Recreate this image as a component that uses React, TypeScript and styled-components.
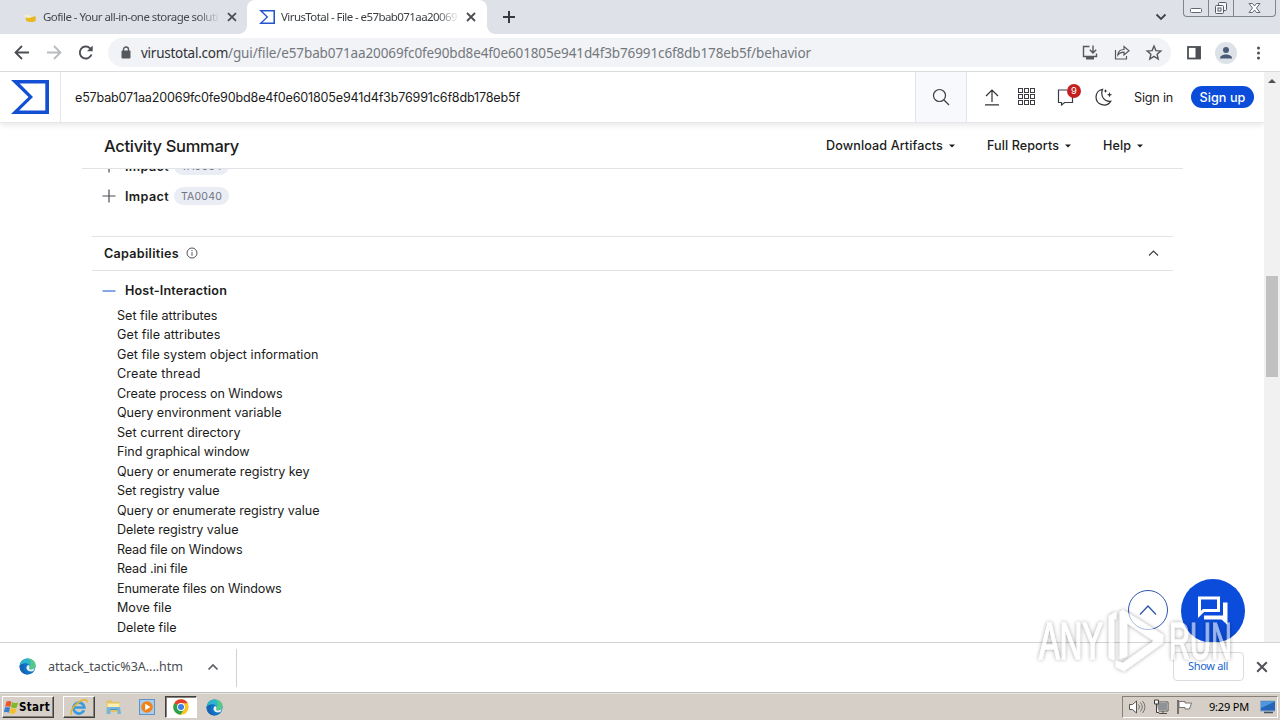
import React, { useLayoutEffect, useRef, useState } from "react";
import styled, { createGlobalStyle } from "styled-components";

const GlobalStyle = createGlobalStyle`
  * { box-sizing: border-box; }
  html, body { margin: 0; padding: 0; }
  body { overflow: hidden; background: #fff; }
`;

const chromeFont = `"Noto Sans", "DejaVu Sans", sans-serif`;
const pageFont = `Inter, Lato, sans-serif`;

/* ---------- Text that is tracked to a given width ---------- */

const Tracked = styled.span`
  display: inline-block;
  white-space: pre;
  flex: none;
`;

function FitText({ children, width }: { children: string; width: number }) {
  const ref = useRef<HTMLSpanElement>(null);
  const [spacing, setSpacing] = useState(0);
  useLayoutEffect(() => {
    if (ref.current) {
      const natural = ref.current.getBoundingClientRect().width;
      setSpacing((width - natural) / children.length);
    }
  }, [children, width]);
  return (
    <Tracked ref={ref} style={{ letterSpacing: `${spacing}px` }}>
      {children}
    </Tracked>
  );
}

/* ---------- Shell ---------- */

const Screen = styled.div`
  position: relative;
  display: flex;
  flex-direction: column;
  width: 1280px;
  height: 720px;
  overflow: hidden;
  background: #fff;
  color: #202124;
  font-family: ${chromeFont};
`;

/* ---------- Tab strip ---------- */

const TabStrip = styled.div`
  display: flex;
  height: 34px;
  background: #dee1e8;
`;

const Tab = styled.div<{ $active?: boolean; $width: number }>`
  position: relative;
  display: flex;
  align-items: center;
  width: ${(p) => p.$width}px;
  padding: 0 10px 0 ${(p) => (p.$active ? 12 : 22)}px;
  font-size: 11.5px;
  color: ${(p) => (p.$active ? "#3c4043" : "#45484d")};
  background: ${(p) => (p.$active ? "#fff" : "transparent")};
  border-radius: 8px 8px 0 0;
  ${(p) =>
    p.$active &&
    `
    &::before, &::after {
      content: "";
      position: absolute;
      bottom: 0;
      width: 8px;
      height: 8px;
    }
    &::before { left: -8px; background: radial-gradient(circle at 0 0, transparent 7.5px, #fff 8px); }
    &::after { right: -8px; background: radial-gradient(circle at 100% 0, transparent 7.5px, #fff 8px); }
  `}
`;

const TabTitle = styled.div`
  width: 176px;
  margin: 0 9px 0 6px;
  overflow: hidden;
  line-height: 18px;
  mask-image: linear-gradient(90deg, #000 88%, rgba(0, 0, 0, 0.1) 100%);
`;

const NewTab = styled.div`
  display: flex;
  align-items: center;
  padding-left: 15px;
`;

const WindowArea = styled.div`
  display: flex;
  margin-left: auto;
  align-items: flex-start;
  gap: 16px;
`;

const TabSearch = styled.div`
  padding-top: 12px;
  line-height: 0;
`;

const WindowButtons = styled.div`
  display: flex;
  height: 17px;
  margin-right: 4px;
  border: 1px solid #7f858f;
  border-top: 0;
  border-radius: 0 0 4px 4px;
`;

const WindowButton = styled.div<{ $width: number }>`
  display: flex;
  align-items: center;
  justify-content: center;
  width: ${(p) => p.$width}px;
  & + & { border-left: 1px solid #7f858f; }
`;

/* ---------- Toolbar ---------- */

const Toolbar = styled.div`
  display: flex;
  align-items: center;
  height: 38px;
  padding: 0 12px 0 13px;
  border-bottom: 1px solid #d9dadc;
  background: #fff;
`;

const NavButtons = styled.div`
  display: flex;
  gap: 14px;
  width: 95px;
`;

const AddressBar = styled.div`
  display: flex;
  align-items: center;
  width: 1063px;
  height: 29px;
  padding: 0 8px 0 12px;
  border-radius: 15px;
  background: #f1f3f6;
  font-size: 13.5px;
  color: #74787d;
`;

const Url = styled.div`
  display: flex;
  flex: 1;
  margin-left: 9px;
  line-height: 20px;
`;

const Host = styled.span`
  color: #303236;
`;

const AddressActions = styled.div`
  display: flex;
  gap: 14px;
`;

const ToolbarActions = styled.div`
  display: flex;
  flex: 1;
  align-items: center;
  justify-content: space-between;
  padding-left: 15px;
`;

const Avatar = styled.div`
  display: flex;
  align-items: center;
  justify-content: center;
  width: 22px;
  height: 22px;
  border-radius: 50%;
  background: #dde1e8;
`;

/* ---------- Page ---------- */

const Viewport = styled.div`
  display: flex;
  height: 570px;
`;

const Page = styled.main`
  display: flex;
  flex-direction: column;
  flex: 1;
  overflow: hidden;
  font-family: ${pageFont};
  font-size: 12.6px;
  color: #1b1c20;
`;

const PageHeader = styled.header`
  position: relative;
  z-index: 1;
  display: flex;
  flex: none;
  height: 51px;
  border-bottom: 1px solid #e6e7ea;
  box-shadow: 0 2px 6px rgba(0, 0, 0, 0.1);
`;

const LogoBox = styled.div`
  display: flex;
  align-items: center;
  width: 61px;
  padding-left: 11px;
  border-right: 1px solid #e3e6ea;
`;

const SearchField = styled.div`
  display: flex;
  align-items: center;
  width: 854px;
  padding-left: 14px;
`;

const SearchButton = styled.div`
  display: flex;
  align-items: center;
  justify-content: center;
  width: 52px;
  padding-right: 1px;
  background: #f7f9fc;
  border: solid #e1e4ea;
  border-width: 0 1px;
`;

const HeaderActions = styled.div`
  display: flex;
  align-items: center;
  padding-left: 14px;
`;

const IconSlot = styled.div<{ $width: number }>`
  position: relative;
  display: flex;
  justify-content: center;
  width: ${(p) => p.$width}px;
`;

const Badge = styled.span`
  position: absolute;
  top: -4px;
  right: 0;
  width: 14px;
  height: 14px;
  border-radius: 50%;
  background: #c5201f;
  color: #fff;
  font-size: 9.5px;
  line-height: 14px;
  text-align: center;
`;

const SignIn = styled.a`
  margin-left: 8px;
`;

const SignUp = styled.a`
  display: flex;
  align-items: center;
  justify-content: center;
  width: 63px;
  height: 22px;
  margin-left: 18px;
  border-radius: 11px;
  background: #0b4dda;
  color: #fff;
  font-weight: 500;
`;

const SummaryBar = styled.div`
  display: flex;
  align-items: center;
  flex: none;
  width: 1101px;
  height: 46px;
  margin-left: 82px;
  padding: 0 40px 0 22px;
  border-bottom: 1px solid #e2e3e6;
`;

const SummaryTitle = styled.h1`
  margin: 0;
  flex: 1;
  font-size: 16.5px;
  font-weight: 500;
  line-height: 24px;
`;

const Menus = styled.div`
  display: flex;
  gap: 32px;
`;

const MenuLabel = styled.div`
  display: flex;
  align-items: center;
  gap: 6px;
  font-weight: 500;
`;

const Scrolled = styled.div`
  display: flex;
  flex-direction: column;
  flex: 1;
  min-height: 0;
  width: 1081px;
  margin-left: 92px;
  overflow: hidden;
`;

const Tactics = styled.div`
  flex: none;
  height: 69px;
  margin-top: -18px;
  margin-bottom: 16px;
`;

const TacticRow = styled.div`
  display: flex;
  align-items: center;
  height: 30px;
  padding-left: 10px;
  font-weight: 600;
`;

const TacticName = styled.div`
  margin: 0 5px 0 9px;
`;

const Tag = styled.span`
  display: flex;
  align-items: center;
  justify-content: center;
  width: 55px;
  height: 18px;
  border-radius: 9px;
  background: #ebedf5;
  color: #6f7484;
  font-size: 10.5px;
  font-weight: 400;
`;

const SectionHead = styled.div`
  display: flex;
  align-items: center;
  flex: none;
  height: 35px;
  padding: 0 14px 1px 12px;
  border: solid #e1e2e5;
  border-width: 1px 0;
  font-weight: 600;
`;

const SectionLabel = styled.div`
  display: flex;
  align-items: center;
  gap: 7px;
  flex: 1;
`;

const Group = styled.div`
  display: flex;
  align-items: center;
  flex: none;
  height: 35px;
  padding: 4px 0 0 10px;
  font-weight: 600;
`;

const CapabilityList = styled.ul`
  list-style: none;
  flex: none;
  margin: -0.25px 0 0;
  padding: 0 0 0 25px;
`;

const Capability = styled.li`
  height: 19.5px;
  line-height: 19.5px;
`;

const ScrollTrack = styled.div`
  display: flex;
  flex-direction: column;
  align-items: center;
  width: 16px;
  padding-top: 7px;
  background: #f1f1f1;
`;

const ScrollThumb = styled.div`
  width: 12px;
  height: 101px;
  margin-top: 193px;
  background: #c1c1c1;
`;

const Floating = styled.div<{ $x: number; $y: number; $size: number; $filled?: boolean }>`
  position: absolute;
  left: ${(p) => p.$x}px;
  top: ${(p) => p.$y}px;
  display: flex;
  align-items: center;
  justify-content: center;
  width: ${(p) => p.$size}px;
  height: ${(p) => p.$size}px;
  border: ${(p) => (p.$filled ? "0" : "1px solid #2f55ad")};
  border-radius: 50%;
  background: ${(p) => (p.$filled ? "#0b4dda" : "#fff")};
`;

/* ---------- Download shelf ---------- */

const Shelf = styled.div`
  position: relative;
  display: flex;
  align-items: center;
  height: 51px;
  padding: 0 12px 0 19px;
  border-top: 1px solid #d3d3d4;
  border-bottom: 1px solid #bfbfbf;
  background: #fff;
`;

const DownloadItem = styled.div`
  display: flex;
  align-items: center;
  width: 218px;
  height: 38px;
  padding-bottom: 2px;
  border-right: 1px solid #d0d1d3;
  font-size: 12.5px;
  color: #4a4d51;
`;

const FileName = styled.div`
  margin: 0 24px 0 12px;
`;

const ShelfActions = styled.div`
  display: flex;
  align-items: center;
  gap: 12px;
  margin: 0 0 1px auto;
`;

const ShowAll = styled.button`
  width: 71px;
  height: 29px;
  margin-bottom: 1px;
  padding: 0 1px 2px 0;
  border: 1px solid #d9dce0;
  border-radius: 4px;
  background: #fff;
  color: #1a65ce;
  font: 11px ${chromeFont};
`;

/* ---------- Taskbar ---------- */

const Taskbar = styled.div`
  display: flex;
  align-items: center;
  height: 27px;
  padding: 0 2px 0 2px;
  background: #d5cfc7;
  border-top: 1px solid #e9e5df;
`;

const StartButton = styled.div`
  display: flex;
  align-items: center;
  width: 52px;
  height: 22px;
  padding-left: 1px;
  border: 1px solid;
  border-color: #fff #404040 #404040 #fff;
  box-shadow: inset -1px -1px #858078;
  color: #000;
  font: bold 11.5px "DejaVu Sans Condensed", "Noto Sans", sans-serif;
`;

const TaskButton = styled.div<{ $state?: "raised" | "active"; $width: number }>`
  display: flex;
  align-items: center;
  justify-content: center;
  width: ${(p) => p.$width}px;
  height: 22px;
  border: 1px solid transparent;
  ${(p) =>
    p.$state === "raised" &&
    `border-color: #fff #404040 #404040 #fff; box-shadow: inset -1px -1px #858078;`}
  ${(p) =>
    p.$state === "active" &&
    `border-color: #404040 #fff #fff #404040; background: #fff; box-shadow: inset 1px 1px #858078;`}
`;

const TaskButtons = styled.div`
  display: flex;
  margin-left: 9px;
  gap: 2px;
`;

const Tray = styled.div`
  display: flex;
  align-items: center;
  width: 156px;
  height: 22px;
  margin-left: auto;
  padding: 0 2px 0 5px;
  border: 1px solid;
  border-color: #858078 #fff #fff #858078;
  color: #000;
  font-size: 11px;
`;

const TrayIcons = styled.div`
  display: flex;
  gap: 7px;
`;

const Clock = styled.div`
  margin: -1px 11px 0 15px;
`;

const WatermarkArt = styled.svg`
  position: absolute;
  left: 1030px;
  top: 600px;
  pointer-events: none;
`;

/* ---------- Icons ---------- */

const line = { fill: "none", strokeLinecap: "butt", strokeLinejoin: "miter" } as const;

const Sigma = ({ w, h, color }: { w: number; h: number; color: string }) => (
  <svg width={w} height={h} viewBox="0 0 38 34" preserveAspectRatio="none">
    <path fill={color} fillRule="evenodd" d="M0 0H38V34H0L17.5 17ZM8.6 3.6L22 17L8.2 30.6H34.3V3.6Z" />
  </svg>
);

const Cross = ({ size, color = "#4a4d52", stroke = 1.8 }: { size: number; color?: string; stroke?: number }) => (
  <svg width={size} height={size} viewBox="0 0 10 10">
    <path d="M1 1L9 9M9 1L1 9" stroke={color} strokeWidth={stroke} {...line} />
  </svg>
);

const GofileIcon = () => (
  <svg width="15" height="16" viewBox="0 0 15 16">
    <path d="M1 7l4-1.500 5 2-3 2z" fill="#f7edcb" />
    <path d="M4 8.500c3 1 6 0 9-1.500.8.5 1.300 3.500.5 5-2 1.300-6.500 1.300-8.500.2C3.800 11.400 3.500 9.800 4 8.500z" fill="#eab71f" />
  </svg>
);

const EdgeIcon = () => (
  <svg width="17" height="17" viewBox="0 0 17 17">
    <circle cx="8.500" cy="8.500" r="8" fill="#1273c4" />
    <path d="M.6 8C1.200 3.400 4.600.5 8.700.5c4.300 0 7.700 3 7.800 6.600 0 2.600-2 4.300-4.300 4.300-1.800 0-2.500-.7-2-1.500.6-1 .7-1.700.2-2.600C9.500 5.600 7.600 5 5.700 5.200 3.300 5.500 1.200 6.700.6 8z" fill="#2fb4cd" />
    <path d="M9 .5c4.300 0 7.400 3 7.500 6.600 0 2.600-2 4.300-4.300 4.300-1.800 0-2.500-.7-2-1.500.6-1 .7-1.700.2-2.600C12.500 6.500 12.500 3 9 .5z" fill="#55c985" />
    <path d="M10.200 9.900c-.5.8.2 1.500 2 1.500 1.300 0 2.500-.5 3.300-1.400.3 1.200-.6 2.600-1.800 3.300-2.900.6-5.600-.5-6.100-2.500C7.200 9.300 7.800 7.800 9 7c1.500.4 1.900 1.700 1.200 2.900z" fill="#e8f4fa" />
    <path d="M.6 8c.8-1.600 3-2.600 5-2.300C3.600 9 5 14.500 9.600 16.400 4.500 17 .3 13 .6 8z" fill="#1763b4" />
  </svg>
);

const ChromeIcon = () => (
  <svg width="16" height="16" viewBox="0 0 16 16">
    <circle cx="8" cy="8" r="7.700" fill="#f9c621" />
    <path d="M8 8L1.300 4.200A7.700 7.700 0 0 1 14.700 4.200H8z" fill="#e2402f" />
    <path d="M8 8L1.300 4.200A7.700 7.700 0 0 0 7.500 15.700L11.300 9.800z" fill="#2da14c" />
    <circle cx="8" cy="8" r="3.900" fill="#fff" />
    <circle cx="8" cy="8" r="3" fill="#3c7fe8" />
  </svg>
);

const WindowsFlag = () => (
  <svg width="15" height="15" viewBox="0 0 15 14">
    <path d="M2.500 1C4.300.2 6 .3 7.500 1.300L6.300 6.400C4.700 5.500 3 5.400 1.200 6.200z" fill="#e8582a" />
    <path d="M8.200 1.700c1.700 1 3.600 1 5.900.2l-1.400 5c-1.900.8-3.900.8-5.700-.1z" fill="#7db928" />
    <path d="M1 7c1.800-.8 3.500-.7 5.100.2L4.900 12.300C3.300 11.400 1.600 11.300-.2 12.100z" fill="#3b7fd4" />
    <path d="M6.800 7.600c1.700.9 3.700 1 5.600.1L11 12.700c-1.900.8-3.700.8-5.500-.1z" fill="#f5bf24" />
  </svg>
);

const IeIcon = () => (
  <svg width="20" height="18" viewBox="0 0 20 18">
    <path d="M15 12.200A5.500 5.500 0 1 1 15.400 9.500H5.500" fill="none" stroke="#3a9bdc" strokeWidth="2.700" />
    <path d="M3 16.500C-.5 14.500 6 5 14 2c3.500-1 4.500.2 3.700 2.500" fill="none" stroke="#e6b52a" strokeWidth="1.500" />
  </svg>
);

const FolderIcon = () => (
  <svg width="17" height="16" viewBox="0 0 16 16">
    <path d="M1 1.500h5l1 1.500h7.500V13H1z" fill="#e3c365" />
    <path d="M2 4.500h12V9H2z" fill="#fbf0b2" />
    <path d="M1.500 8h13l1 7h-3.500V11H5v4H1z" fill="#72b6dd" />
    <path d="M5 11h7v-1H5z" fill="#4b93c4" />
  </svg>
);

const PlayerIcon = () => (
  <svg width="16" height="16" viewBox="0 0 16 16">
    <rect x=".5" y=".5" width="15" height="15" fill="#a9cdee" stroke="#5f92c8" />
    <circle cx="8" cy="8" r="5.800" fill="#f0831a" />
    <path d="M6.200 4.700L11.500 8l-5.300 3.300z" fill="#fff" />
  </svg>
);

const Plus = () => (
  <svg width="14" height="14" viewBox="0 0 14 14">
    <path d="M7 .5v13M.5 7h13" stroke="#4b4d52" strokeWidth="1.200" {...line} />
  </svg>
);

const Caret = () => (
  <svg width="6" height="4" viewBox="0 0 6 4">
    <path d="M0 .5h6L3 3.500z" fill="#1b1c20" />
  </svg>
);

const Watermark = () => (
  <WatermarkArt width="215" height="80" viewBox="0 0 215 80">
    <defs>
      <filter id="soft" x="-10%" y="-10%" width="120%" height="120%">
        <feDropShadow dx="0" dy="0" stdDeviation="2" floodColor="#000" floodOpacity=".65" />
      </filter>
    </defs>
    <g filter="url(#soft)" opacity=".58" fill="#fff" stroke="#fff" fontFamily="Liberation Sans, sans-serif" fontSize="52">
      <text x="9" y="59" strokeWidth="1.200" textLength="64" lengthAdjust="spacingAndGlyphs">ANY</text>
      <text x="139" y="59" strokeWidth="1.200" textLength="63" lengthAdjust="spacingAndGlyphs">RUN</text>
      <path fillRule="evenodd" strokeWidth=".5" d="M93 10L133 35V43L94 71L86 67V61L93 63L124 41L97 23V56L90 59V12zM79 16L86 12V19H84V60L79 58z" />
    </g>
  </WatermarkArt>
);

/* ---------- Data ---------- */

const capabilities: [string, number][] = [
  ["Set file attributes", 100],
  ["Get file attributes", 103],
  ["Get file system object information", 201],
  ["Create thread", 83],
  ["Create process on Windows", 165],
  ["Query environment variable", 164],
  ["Set current directory", 123],
  ["Find graphical window", 132],
  ["Query or enumerate registry key", 192],
  ["Set registry value", 102],
  ["Query or enumerate registry value", 202],
  ["Delete registry value", 121],
  ["Read file on Windows", 125],
  ["Read .ini file", 70],
  ["Enumerate files on Windows", 164],
  ["Move file", 54],
  ["Delete file", 59],
];

const menus: [string, number][] = [
  ["Download Artifacts", 117],
  ["Full Reports", 72],
  ["Help", 28],
];

const fileHash = "e57bab071aa20069fc0fe90bd8e4f0e601805e941d4f3b76991c6f8db178eb5f";

export default function App() {
  return (
    <Screen>
      <GlobalStyle />
      <TabStrip>
        <Tab $width={247}>
          <GofileIcon />
          <TabTitle><FitText width={175}>Gofile - Your all-in-one storage soluti</FitText></TabTitle>
          <Cross size={10} />
        </Tab>
        <Tab $active $width={240}>
          <Sigma w={16} h={14} color="#2455cf" />
          <TabTitle><FitText width={176}>VirusTotal - File - e57bab071aa20069</FitText></TabTitle>
          <Cross size={10} />
        </Tab>
        <NewTab>
          <svg width="14" height="14"><path d="M7 1v12M1 7h12" stroke="#36393e" strokeWidth="2" /></svg>
        </NewTab>
        <WindowArea>
          <TabSearch>
            <svg width="12" height="10"><path d="M1.500 2.500L6 7l4.500-4.500" stroke="#3f4247" strokeWidth="1.800" {...line} /></svg>
          </TabSearch>
          <WindowButtons>
            <WindowButton $width={24}>
              <svg width="12" height="16"><rect x=".5" y="8.500" width="11" height="4" rx="1" fill="#fff" stroke="#626771" /></svg>
            </WindowButton>
            <WindowButton $width={25}>
              <svg width="14" height="16" fill="#f6f7f9" stroke="#555a64"><rect x="4.500" y="2.500" width="8" height="8" rx="1" /><rect x="1.500" y="5.500" width="8" height="8" rx="1" /><rect x="4" y="8" width="3" height="3" /></svg>
            </WindowButton>
            <WindowButton $width={42}>
              <svg width="13" height="16"><path d="M1 3.500h3.500L6.500 6l2-2.500H12L8.500 8l3.500 4.500H8.500l-2-2.500-2 2.500H1L4.500 8z" fill="#fff" stroke="#626771" /></svg>
            </WindowButton>
          </WindowButtons>
        </WindowArea>
      </TabStrip>

      <Toolbar>
        <NavButtons>
          <svg width="18" height="18"><path d="M16 8.500H3M9 2L2.500 8.500 9 15" stroke="#4c4f54" strokeWidth="1.800" {...line} /></svg>
          <svg width="18" height="18"><path d="M2 8.500h13M9 2l6.500 6.500L9 15" stroke="#b9bbbe" strokeWidth="1.800" {...line} /></svg>
          <svg width="18" height="18"><path d="M14.500 10.500A6 6 0 1 1 13 4.200L14.500 5.500" stroke="#4c4f54" strokeWidth="1.900" {...line} /><path d="M15.700 1.500v5.700H10z" fill="#4c4f54" /></svg>
        </NavButtons>
        <AddressBar>
          <svg width="12" height="14"><rect x="1.500" y="4.500" width="9" height="8" rx="1" fill="#55585d" /><path d="M3.500 5V3.500a2.500 2.500 0 0 1 5 0V5" fill="none" stroke="#55585d" strokeWidth="1.400" /></svg>
          <Url>
            <Host><FitText width={87}>virustotal.com</FitText></Host>
            <FitText width={583}>{`/gui/file/${fileHash}/behavior`}</FitText>
          </Url>
          <AddressActions>
            <svg width="18" height="18"><path d="M8.500 2.500H2.500V12.500H15.500V9.500M12 1.500v7M8.800 5.700L12 8.900l3.200-3.200" stroke="#55585d" strokeWidth="1.400" {...line} /><path d="M5 13h8v2.500H5z" fill="#55585d" /></svg>
            <svg width="18" height="18"><path d="M2.500 6v9H13.500V12M4.800 11C5 7.500 7.500 5.500 11 5.500V2.500l5 4.300-5 4.200V8.200C8 8.200 6.200 9 4.800 11z" stroke="#55585d" strokeWidth="1.200" {...line} /></svg>
            <svg width="18" height="18"><path d="M9 2l1.900 4.600 4.900.4-3.700 3.200 1.100 4.800L9 12.400l-4.200 2.600 1.100-4.800L2.200 7l4.900-.4z" stroke="#55585d" strokeWidth="1.400" {...line} /></svg>
          </AddressActions>
        </AddressBar>
        <ToolbarActions>
          <svg width="16" height="16"><rect x="2" y="2" width="12" height="11.500" fill="#fff" stroke="#4c4f54" strokeWidth="1.800" /><path d="M9.500 2h5v11.500h-5z" fill="#4c4f54" /></svg>
          <Avatar>
            <svg width="14" height="14"><circle cx="7" cy="4" r="3" fill="#4a5a78" /><path d="M1 12.500c0-3 3-4 6-4s6 1 6 4z" fill="#4a5a78" /></svg>
          </Avatar>
          <svg width="18" height="16" fill="#4c4f54"><circle cx="8.500" cy="3" r="1.500" /><circle cx="8.500" cy="8" r="1.500" /><circle cx="8.500" cy="13" r="1.500" /></svg>
        </ToolbarActions>
      </Toolbar>

      <Viewport>
        <Page>
          <PageHeader>
            <LogoBox><Sigma w={38} h={34} color="#124fd3" /></LogoBox>
            <SearchField><FitText width={445}>{fileHash}</FitText></SearchField>
            <SearchButton>
              <svg width="18" height="18"><circle cx="7.500" cy="7.500" r="6" stroke="#3b3d42" strokeWidth="1.200" {...line} /><path d="M12 12l5 5" stroke="#3b3d42" strokeWidth="1.200" /></svg>
            </SearchButton>
            <HeaderActions>
              <IconSlot $width={21}>
                <svg width="16" height="18"><path d="M8 14V2M2 8L8 2l6 6M1 16.800h14" stroke="#303238" strokeWidth="1.200" {...line} /></svg>
              </IconSlot>
              <IconSlot $width={49}>
                <svg width="18" height="18" fill="none" stroke="#3b3d42">
                  {[1, 7, 13].map((y) => [1, 7, 13].map((x) => <rect key={`${x}-${y}`} x={x - 0.5} y={y - 0.5} width="4" height="4" />))}
                </svg>
              </IconSlot>
              <IconSlot $width={30}>
                <svg width="20" height="18"><path d="M11 2H2.500V14.500H5.500V17L8.700 14.500H16.500V9" stroke="#3b3d42" strokeWidth="1.200" {...line} /></svg>
                <Badge>9</Badge>
              </IconSlot>
              <IconSlot $width={45}>
                <svg width="18" height="18"><path d="M7.500 1.300C3.800 2 1 5 1 9a8 8 0 0 0 14.700 4.300C9.500 14 5 8.500 7.500 1.300z" stroke="#303238" strokeWidth="1.200" {...line} /><path d="M10.500 1l.6 1.400 1.400.6-1.400.6-.6 1.400-.6-1.400L8.500 3l1.400-.6zM14.500 4l.7 2 2 .7-2 .7-.7 2-.7-2-2-.7 2-.7z" fill="#303238" /></svg>
              </IconSlot>
              <SignIn><FitText width={39}>Sign in</FitText></SignIn>
              <SignUp><FitText width={46}>Sign up</FitText></SignUp>
            </HeaderActions>
          </PageHeader>

          <SummaryBar>
            <SummaryTitle><FitText width={135}>Activity Summary</FitText></SummaryTitle>
            <Menus>
              {menus.map(([label, width]) => (
                <MenuLabel key={label}><FitText width={width}>{label}</FitText><Caret /></MenuLabel>
              ))}
            </Menus>
          </SummaryBar>

          <Scrolled>
            <Tactics>
              {["TA0034", "TA0040"].map((tag) => (
                <TacticRow key={tag}>
                  <Plus />
                  <TacticName><FitText width={44}>Impact</FitText></TacticName>
                  <Tag><FitText width={41}>{tag}</FitText></Tag>
                </TacticRow>
              ))}
            </Tactics>
            <SectionHead>
              <SectionLabel>
                <FitText width={75}>Capabilities</FitText>
                <svg width="12" height="12"><circle cx="6" cy="6" r="5" stroke="#505258" fill="none" /><path d="M6 5.200v3.600M6 3v1.200" stroke="#505258" /></svg>
              </SectionLabel>
              <svg width="11" height="8"><path d="M1 6.500L5.500 2 10 6.500" stroke="#3b3d42" strokeWidth="1.100" {...line} /></svg>
            </SectionHead>
            <Group>
              <svg width="14" height="14"><path d="M.5 7h13" stroke="#5f8be0" strokeWidth="1.500" /></svg>
              <TacticName><FitText width={102}>Host-Interaction</FitText></TacticName>
            </Group>
            <CapabilityList>
              {capabilities.map(([label, width]) => (
                <Capability key={label}><FitText width={width + 0.5}>{label}</FitText></Capability>
              ))}
            </CapabilityList>
          </Scrolled>
        </Page>
        <ScrollTrack>
          <svg width="8" height="4"><path d="M4 0l4 4H0z" fill="#505050" /></svg>
          <ScrollThumb />
        </ScrollTrack>
      </Viewport>

      <Floating $x={1128} $y={590} $size={40}>
        <svg width="18" height="12"><path d="M1 10.500L9 2l8 8.500" stroke="#2f55ad" strokeWidth="1.300" {...line} /></svg>
      </Floating>
      <Floating $x={1181} $y={579} $size={64} $filled>
        <svg width="32" height="32"><path d="M2.500 3H21.500V15.500H6.500L2.500 19.500z" stroke="#fff" strokeWidth="3" {...line} /><path d="M26 7.500h4.500V30l-6-5.500H7v-4h19z" fill="#fff" /></svg>
      </Floating>

      <Shelf>
        <DownloadItem>
          <EdgeIcon />
          <FileName><FitText width={135}>attack_tactic%3A....htm</FitText></FileName>
          <svg width="12" height="8"><path d="M1.500 6.500L6 2l4.500 4.500" stroke="#5c5f64" strokeWidth="1.700" {...line} /></svg>
        </DownloadItem>
        <ShelfActions>
          <ShowAll><FitText width={40}>Show all</FitText></ShowAll>
          <Cross size={12} color="#505357" stroke={1.7} />
        </ShelfActions>
      </Shelf>

      <Taskbar>
        <StartButton><WindowsFlag /><FitText width={31}>Start</FitText></StartButton>
        <TaskButtons>
          <TaskButton $width={32} $state="raised"><IeIcon /></TaskButton>
          <TaskButton $width={32}><FolderIcon /></TaskButton>
          <TaskButton $width={32}><PlayerIcon /></TaskButton>
          <TaskButton $width={32} $state="active"><ChromeIcon /></TaskButton>
          <TaskButton $width={31}><EdgeIcon /></TaskButton>
        </TaskButtons>
        <Tray>
          <TrayIcons>
            <svg width="18" height="16"><path d="M1.500 5.500h3L8.500 2v12l-4-3.500h-3z" fill="#fff" stroke="#55534f" /><path d="M10.500 5.500q2 2.500 0 5M12.500 3.500q3.500 4.500 0 9M14.500 2q5 6 0 12" fill="none" stroke="#77746f" /></svg>
            <svg width="16" height="16"><rect x="4.500" y="3.500" width="10" height="8" fill="#8f9296" stroke="#fff" /><path d="M4 3h11v9H4zM6 14.500h8M10 12v2.500" fill="none" stroke="#504e4b" /><path d="M1.500 1v4h4V1zM3.500 5v8.500H6" fill="#f3f1ee" stroke="#403e3b" /></svg>
            <svg width="18" height="16"><path d="M2 1v14" stroke="#55534f" strokeWidth="1.500" /><path d="M3 2.500h6v1.500h6.500l-2 6H9V8.500H3z" fill="#fff" stroke="#77746f" /></svg>
          </TrayIcons>
          <Clock><FitText width={40}>9:29 PM</FitText></Clock>
          <svg width="16" height="14"><rect x=".5" y="1" width="15" height="10" fill="#2465b8" stroke="#8aa9cd" /><path d="M1 1.500h14L1 8z" fill="#4f97dc" /><path d="M4 12.500h9" stroke="#454f60" strokeWidth="1.500" /></svg>
        </Tray>
      </Taskbar>

      <Watermark />
    </Screen>
  );
}
